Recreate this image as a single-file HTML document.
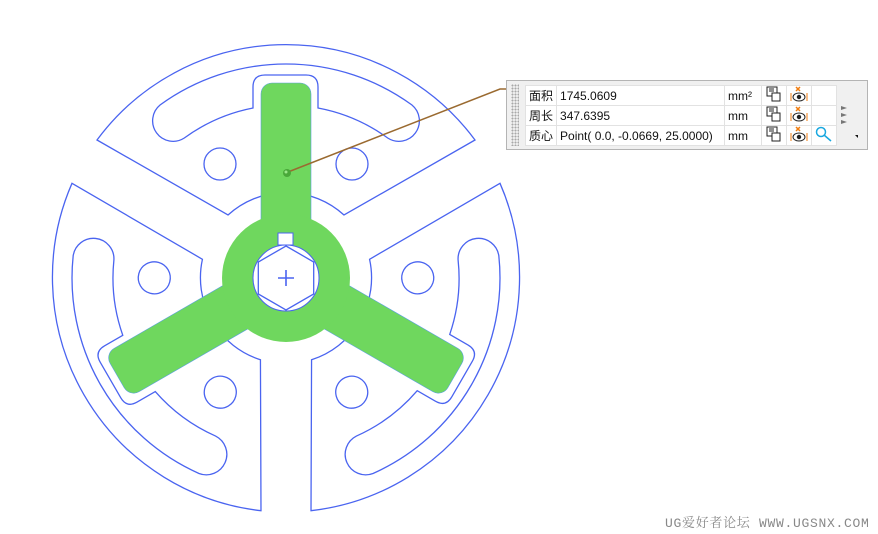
<!DOCTYPE html>
<html><head><meta charset="utf-8"><style>
html,body{margin:0;padding:0;background:#fff;width:878px;height:534px;overflow:hidden;position:relative;font-family:"Liberation Sans","Noto Sans CJK SC",sans-serif}
#panel{position:absolute;left:506px;top:80px;width:362px;height:70px;background:#f0f0f0;border:1px solid #b4b4b4;box-sizing:border-box}
.grip{position:absolute;left:4px;top:3px;width:8px;height:62px;background-image:radial-gradient(circle,#a8a8a8 0.9px,transparent 1.1px);background-size:3px 3px}
table{position:absolute;left:18px;top:4px;border-collapse:collapse;background:#fff;font-size:12px;color:#111}
td{border:1px solid #e2e2e2;height:19px;padding:0 3px;white-space:nowrap}
td.i{width:18px;padding:0 3px;text-align:center}
.wm{position:absolute;left:665px;top:512px;font-family:"Liberation Mono","Noto Serif CJK SC",monospace;font-size:13px;color:#888;letter-spacing:0.7px}
</style></head><body>
<svg width="878" height="534" style="position:absolute;left:0;top:0">
<defs>
<g id="sec" fill="none" stroke="#4a64f0" stroke-width="1.3">
<path d="M97,140 A235,235 0 0 1 475,140 L344,215 A86,86 0 0 0 228,215 Z"/>
<path d="M160.2,104.9 A214,214 0 0 1 411.8,104.9 A20.5,20.5 0 0 1 387.7,138 A173,173 0 0 0 318,108 L318,87 Q318,75 306,75 L265,75 Q253,75 253,87 L253,108 A173,173 0 0 0 184.3,138 A20.5,20.5 0 0 1 160.2,104.9 Z"/>
<circle cx="220" cy="164" r="16"/><circle cx="352" cy="164" r="16"/>
</g>
<rect id="arm" x="261" y="83" width="50" height="200" rx="11" fill="#6fd75e" stroke="#5a9fe0" stroke-width="0.6"/>
</defs>
<use href="#sec"/>
<use href="#sec" transform="rotate(120 286 278)"/>
<use href="#sec" transform="rotate(-120 286 278)"/>
<use href="#arm"/>
<use href="#arm" transform="rotate(120 286 278)"/>
<use href="#arm" transform="rotate(-120 286 278)"/>
<circle cx="286" cy="278" r="64" fill="#6fd75e"/>
<path d="M278,245 L278,233 L293,233 L293,245 Z" fill="#fff" stroke="#4a64f0" stroke-width="1"/>
<circle cx="286" cy="278" r="33" fill="#fff" stroke="#4a64f0" stroke-width="1"/>
<path d="M286,246 L313.7,262 L313.7,294 L286,310 L258.3,294 L258.3,262 Z" fill="none" stroke="#4a64f0" stroke-width="1.3"/>
<path d="M278,278 H294 M286,270 V286" stroke="#4a64f0" stroke-width="1.6"/>
<path d="M288,172 L500,89 L507,89" stroke="#9a6a30" stroke-width="1.5" fill="none"/>
<circle cx="287" cy="173" r="4" fill="#4aa83a"/><circle cx="286" cy="172" r="1.5" fill="#9be88a"/>
</svg>
<div id="panel"><div class="grip"></div>
<table>
<tr><td>面积</td><td style="width:161px">1745.0609</td><td style="width:30px">mm²</td><td class="i"><svg width="16" height="16"><rect x="1" y="1" width="10" height="9" fill="#fff" stroke="#222"/><rect x="6" y="7" width="8" height="8" fill="#fff" stroke="#222"/><path d="M3,3 H8 M3,5 H8" stroke="#222"/></svg></td><td class="i"><svg width="18" height="16"><path d="M6,1 L10,5 M10,1 L6,5" stroke="#f07d10" stroke-width="1.5"/><path d="M1,7 V15 M17,7 V15" stroke="#f07d10"/><ellipse cx="9" cy="11" rx="6" ry="4" fill="#fff" stroke="#222"/><circle cx="9" cy="11" r="2.2" fill="#222"/></svg></td><td class="i"></td></tr>
<tr><td>周长</td><td>347.6395</td><td>mm</td><td class="i"><svg width="16" height="16"><rect x="1" y="1" width="10" height="9" fill="#fff" stroke="#222"/><rect x="6" y="7" width="8" height="8" fill="#fff" stroke="#222"/><path d="M3,3 H8 M3,5 H8" stroke="#222"/></svg></td><td class="i"><svg width="18" height="16"><path d="M6,1 L10,5 M10,1 L6,5" stroke="#f07d10" stroke-width="1.5"/><path d="M1,7 V15 M17,7 V15" stroke="#f07d10"/><ellipse cx="9" cy="11" rx="6" ry="4" fill="#fff" stroke="#222"/><circle cx="9" cy="11" r="2.2" fill="#222"/></svg></td><td class="i"></td></tr>
<tr><td>质心</td><td>Point( 0.0, -0.0669, 25.0000)</td><td>mm</td><td class="i"><svg width="16" height="16"><rect x="1" y="1" width="10" height="9" fill="#fff" stroke="#222"/><rect x="6" y="7" width="8" height="8" fill="#fff" stroke="#222"/><path d="M3,3 H8 M3,5 H8" stroke="#222"/></svg></td><td class="i"><svg width="18" height="16"><path d="M6,1 L10,5 M10,1 L6,5" stroke="#f07d10" stroke-width="1.5"/><path d="M1,7 V15 M17,7 V15" stroke="#f07d10"/><ellipse cx="9" cy="11" rx="6" ry="4" fill="#fff" stroke="#222"/><circle cx="9" cy="11" r="2.2" fill="#222"/></svg></td><td class="i"><svg width="18" height="16"><circle cx="6" cy="6" r="4.5" fill="none" stroke="#19a8e0" stroke-width="1.5"/><path d="M9,9 L16,15" stroke="#19a8e0" stroke-width="1.5"/></svg></td></tr>
</table>
<svg width="20" height="60" style="position:absolute;left:331px;top:22px"><path d="M3,3 L9,5 L3,7Z M3,10 L9,12 L3,14Z M3,17 L9,19 L3,21Z" fill="#777"/><path d="M17,32 L23,32 L20,35Z" fill="#111"/></svg>
</div>
<div class="wm">UG爱好者论坛 WWW.UGSNX.COM</div>
</body></html>
